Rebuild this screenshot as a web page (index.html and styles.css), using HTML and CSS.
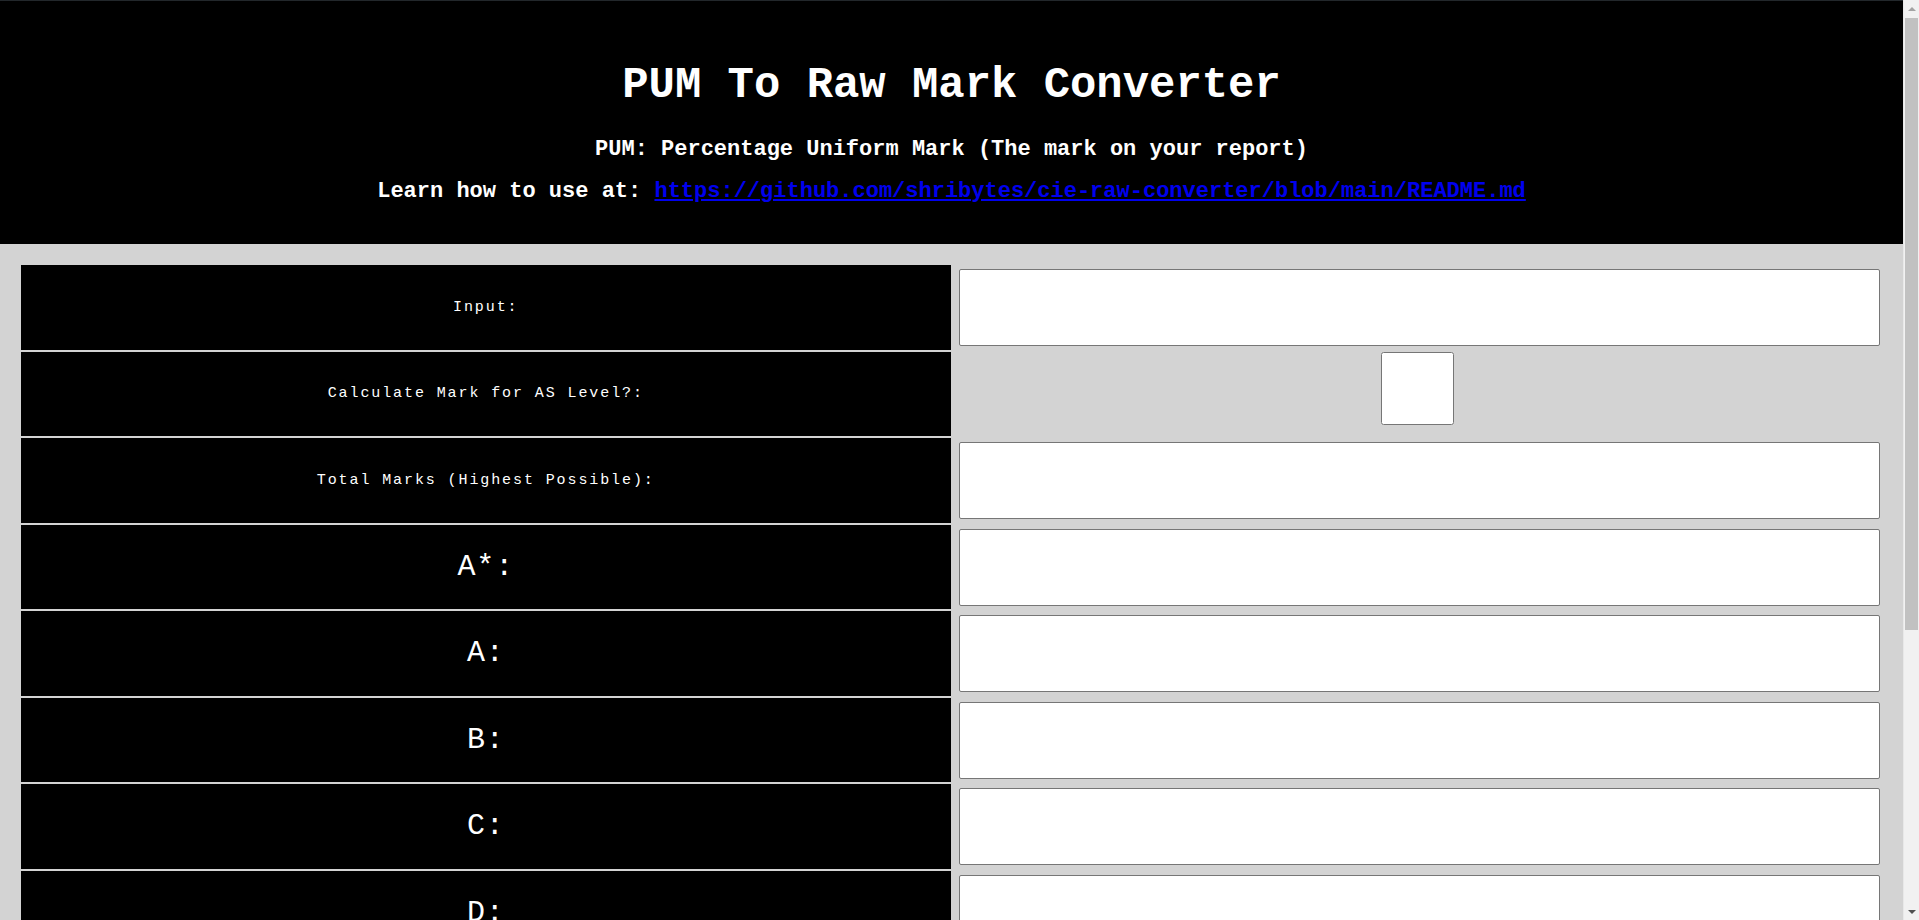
FILE: index.html
```html
<!DOCTYPE html>
<html lang="en">
<head>
<meta charset="utf-8">
<title>PUM To Raw Mark Converter</title>
<link rel="stylesheet" href="styles.css">
</head>
<body>
<header class="top">
  <h1 class="title">PUM To Raw Mark Converter</h1>
  <p class="sub">PUM: Percentage Uniform Mark (The mark on your report)</p>
  <p class="sub sub-link">Learn how to use at: <a href="#">https://github.com/shribytes/cie-raw-converter/blob/main/README.md</a></p>
</header>
<table class="grid">
  <tr>
    <td class="label small">Input:</td>
    <td class="field"><input type="text" class="box"></td>
  </tr>
  <tr>
    <td class="label small">Calculate Mark for AS Level?:</td>
    <td class="check"><input type="checkbox" class="tick"></td>
  </tr>
  <tr>
    <td class="label small">Total Marks (Highest Possible):</td>
    <td class="field"><input type="text" class="box"></td>
  </tr>
  <tr>
    <td class="label big">A*:</td>
    <td class="field"><input type="text" class="box"></td>
  </tr>
  <tr>
    <td class="label big">A:</td>
    <td class="field"><input type="text" class="box"></td>
  </tr>
  <tr>
    <td class="label big">B:</td>
    <td class="field"><input type="text" class="box"></td>
  </tr>
  <tr>
    <td class="label big">C:</td>
    <td class="field"><input type="text" class="box"></td>
  </tr>
  <tr>
    <td class="label big">D:</td>
    <td class="field"><input type="text" class="box"></td>
  </tr>
  <tr>
    <td class="label big">E:</td>
    <td class="field"><input type="text" class="box"></td>
  </tr>
</table>
<div class="scrollbar" aria-hidden="true">
  <div class="sb-arrow sb-up"></div>
  <div class="sb-track"><div class="sb-thumb"></div></div>
  <div class="sb-arrow sb-down"></div>
</div>
</body>
</html>
```
FILE: styles.css
```css
html, body {
  margin: 0;
  padding: 0;
}
body {
  background: #d3d3d3;
  font-family: "Liberation Mono", "Courier New", monospace;
  margin-right: 16px;
}
.top {
  background: #000;
  color: #fff;
  text-align: center;
  border-top: 1px solid #22272b;
  padding: 59px 0 39px;
}
.title {
  margin: 0 0 27px;
  font-size: 43.9px;
  line-height: 50px;
  font-weight: bold;
}
.sub {
  margin: 0;
  font-size: 22px;
  line-height: 26px;
  font-weight: bold;
}
.sub-link {
  margin-top: 16px;
}
.sub-link a {
  color: #0000ee;
  text-decoration: underline;
}
.grid {
  width: 98%;
  margin: 19px auto 0;
  border-spacing: 2px;
  table-layout: fixed;
}
.grid td {
  height: 84.5px;
  width: 50%;
  box-sizing: border-box;
}
.label {
  background: #000;
  color: #fff;
  text-align: center;
  vertical-align: middle;
  padding: 0;
}
.small {
  font-size: 15px;
  letter-spacing: 1.9px;
}
.big {
  font-size: 30px;
  letter-spacing: 0.8px;
}
.field {
  vertical-align: top;
  padding: 4px 2px 0 6px;
}
.box {
  display: block;
  width: 100%;
  height: 77px;
  box-sizing: border-box;
  margin: 0;
  background: #fff;
  border: 1px solid #767676;
  border-radius: 2px;
}
.check {
  vertical-align: top;
  text-align: center;
  padding: 0;
}
.tick {
  width: 73px;
  height: 73px;
  margin: 0;
  vertical-align: top;
}
.scrollbar {
  position: fixed;
  top: 0;
  right: 0;
  width: 16px;
  height: 100%;
  background: #f1f1f1;
  border-left: 1px solid #e8e8e8;
  box-sizing: border-box;
  display: flex;
  flex-direction: column;
}
.sb-arrow {
  height: 17px;
  flex: none;
  display: flex;
  align-items: center;
  justify-content: center;
}
.sb-up::before,
.sb-down::before {
  content: "";
  width: 0;
  height: 0;
  border-left: 4px solid transparent;
  border-right: 4px solid transparent;
}
.sb-up::before {
  border-bottom: 4px solid #a3a3a3;
}
.sb-down::before {
  border-top: 4px solid #505050;
}
.sb-track {
  flex: 1;
  padding: 0 1px 0 1px;
}
.sb-thumb {
  height: 612px;
  margin-top: 1px;
  background: #c1c1c1;
}
```
